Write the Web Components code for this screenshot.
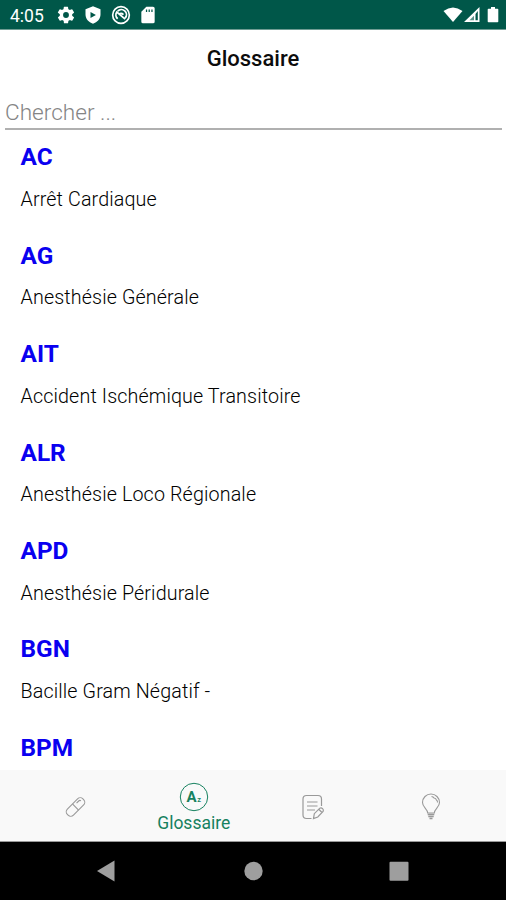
<!DOCTYPE html>
<html lang="fr">
<head>
<meta charset="utf-8">
<title>Glossaire</title>
<style>
  html, body { height: 100%; }
  body {
    margin: 0;
    overflow: hidden;
    font-family: Roboto, "Noto Sans", sans-serif;
    background: #fff;
  }
</style>
</head>
<body>
<glossary-app></glossary-app>

<script>
'use strict';

class BaseElement extends HTMLElement {
  constructor() {
    super();
    this._shadow = this.attachShadow({ mode: 'open' });
    this._shadow.innerHTML = this.template;
  }
}

class StatusBar extends BaseElement {
  get template() {
    return `
    <style>
      :host {
        display: flex;
        align-items: center;
        justify-content: space-between;
        box-sizing: border-box;
        height: 30px;
        padding: 1px 7px 0 10px;
        background: #005749;
        border-bottom: 1px solid #6f9c93;
        color: #fff;
        flex: none;
      }
      div { display: flex; align-items: center; }
      time { font-size: 17.5px; line-height: 28px; width: 46px; padding-top: 2px; }
      .left svg { margin-right: 7.4px; }
      svg { display: block; fill: #fff; }
    </style>
    <div class="left">
      <time>4:05</time>
      <svg width="20" height="20" viewBox="0 0 24 24"><path d="M19.4 13a7.500 7.500 0 0 0 0-2l2.100-1.600a.5.5 0 0 0 .1-.6l-2-3.500a.5.5 0 0 0-.6-.2l-2.500 1a7 7 0 0 0-1.700-1l-.4-2.600a.5.5 0 0 0-.5-.5h-4a.5.5 0 0 0-.5.4l-.4 2.700a7 7 0 0 0-1.700 1l-2.400-1a.5.5 0 0 0-.6.200l-2 3.400a.5.5 0 0 0 .1.700L4.600 11a7.500 7.500 0 0 0 0 2l-2.100 1.600a.5.5 0 0 0-.1.600l2 3.500a.5.5 0 0 0 .6.200l2.500-1a7 7 0 0 0 1.700 1l.3 2.600a.5.5 0 0 0 .5.500h4a.5.5 0 0 0 .5-.4l.4-2.700a7 7 0 0 0 1.700-1l2.400 1a.5.5 0 0 0 .6-.2l2-3.400a.5.5 0 0 0-.1-.7zM12 15.500a3.500 3.500 0 1 1 0-7 3.500 3.500 0 0 1 0 7z"/></svg>
      <svg width="20" height="20" viewBox="0 0 24 24"><path fill-rule="evenodd" d="M12 1.500L3 5v6.500c0 5.200 3.800 9.500 9 11 5.200-1.500 9-5.800 9-11V5zM9 8.500L15.500 12l-6.500 3.500z"/></svg>
      <svg width="20" height="20" viewBox="0 0 24 24"><g fill="none" stroke="#fff"><circle cx="12" cy="12" r="10" stroke-width="2"/><path d="M8 16.500A6 6 0 0 1 7 8.500L17 17M8 7.500a6 6 0 0 1 9 8M9.500 11.500q2.500-2.500 5.500 0" stroke-width="2.200"/></g></svg>
      <svg width="20" height="20" viewBox="0 0 24 24"><path fill-rule="evenodd" d="M18 2h-8L4 8v12a2 2 0 0 0 2 2h12a2 2 0 0 0 2-2V4a2 2 0 0 0-2-2zM9.500 5.500h1.500v3H9.500zM12.700 5.500h1.500v3h-1.500zM16 5.500h1.500v3H16z"/></svg>
    </div>
    <div>
      <svg width="20" height="18" viewBox="0 0 20 18"><path d="M.5 5Q10-2 19.500 5L10 16z"/></svg>
      <svg width="17" height="18" viewBox="0 0 17 18"><path fill-rule="evenodd" d="M16.500 1v15H1zM12.500 8v6.300H14.800V5z"/><path d="M6.500 14.300L11 9.700v4.600z" fill="#005749" opacity=".65"/></svg>
      <svg width="12" height="18" viewBox="0 0 12 18" style="margin-left:7px"><path d="M4 1h4v1.700h2.500q.8 0 .8.800v12q0 .8-.8.800h-9q-.8 0-.8-.8v-12q0-.8.8-.8H4z"/></svg>
    </div>`;
  }
}

class PageHeader extends BaseElement {
  get template() {
    return `
    <style>
      :host { display: block; flex: none; height: 61px; }
      h1 {
        margin: 0;
        padding-top: 1px;
        font-size: 22px;
        font-weight: 500;
        line-height: 55px;
        text-align: center;
        color: #0c0c0c;
      }
    </style>
    <h1><slot></slot></h1>`;
  }
}

class SearchField extends BaseElement {
  get template() {
    return `
    <style>
      :host { display: block; flex: none; height: 39px; padding: 0 4px 0 5px; }
      input {
        display: block;
        box-sizing: border-box;
        width: 100%;
        height: 39px;
        padding: 5px 0 0;
        border: 0;
        border-bottom: 2px solid #b0b0b0;
        outline: 0;
        background: transparent;
        font: 300 22.600px Roboto, sans-serif;
      }
      input::placeholder { color: #858585; opacity: 1; }
    </style>
    <input type="text">`;
  }
  connectedCallback() {
    this._shadow.querySelector('input').placeholder = this.getAttribute('placeholder');
  }
}

class GlossaryEntry extends BaseElement {
  get template() {
    return `
    <style>
      :host { display: block; height: 98.400px; padding-left: 20.500px; }
      .term {
        font-size: 24.400px;
        font-weight: 700;
        line-height: 30px;
        padding-top: 12.400px;
        color: #0a00f0;
      }
      .text {
        font-size: 19.700px;
        font-weight: 300;
        letter-spacing: 0.130px;
        line-height: 24px;
        padding-top: 15.600px;
        color: #000;
      }
    </style>
    <div class="term"><slot name="term"></slot></div>
    <div class="text"><slot></slot></div>`;
  }
}

class TabItem extends BaseElement {
  get template() {
    return `
    <style>
      :host {
        display: flex;
        flex: 1;
        flex-direction: column;
        align-items: center;
        justify-content: center;
        color: #999;
      }
      :host([active]) { color: #16815f; padding-top: 3px; }
      .label {
        font-size: 17.500px;
        line-height: 22px;
      }
      :host(:not([active])) .label { display: none; }
      ::slotted(svg) { display: block; }
    </style>
    <slot></slot>
    <div class="label"><slot name="label"></slot></div>`;
  }
}

class TabBar extends BaseElement {
  get template() {
    return `
    <style>
      :host {
        display: flex;
        box-sizing: border-box;
        flex: none;
        height: 72px;
        padding: 2px 16px 0;
        background: #f9f9f9;
        border-bottom: 1px solid #999;
      }
    </style>
    <slot></slot>`;
  }
}

class SystemNav extends BaseElement {
  get template() {
    return `
    <style>
      :host {
        display: flex;
        flex: none;
        justify-content: center;
        align-items: center;
        gap: 126px;
        height: 58px;
        background: #000;
      }
      svg { display: block; fill: #9e9e9e; }
    </style>
    <svg width="20" height="22" viewBox="0 0 20 22"><path d="M0 11L17.500.5v21z"/></svg>
    <svg width="20" height="20" viewBox="0 0 20 20"><circle cx="10.500" cy="10" r="9.200"/></svg>
    <svg width="20" height="20" viewBox="0 0 20 20"><rect x=".5" y=".8" width="19" height="19" rx="1"/></svg>`;
  }
}

class GlossaryApp extends BaseElement {
  get template() {
    return `
    <style>
      :host { display: flex; flex-direction: column; height: 100vh; }
      main { flex: 1; min-height: 0; overflow: hidden; }
      .az { font: 700 15px Roboto, sans-serif; fill: currentColor; }
      .az-small { font: 500 7.500px Roboto, sans-serif; fill: currentColor; }
    </style>
    <status-bar></status-bar>
    <page-header>Glossaire</page-header>
    <search-field placeholder="Chercher ..."></search-field>
    <main></main>
    <tab-bar>
      <tab-item>
        <svg width="24" height="24" viewBox="0 0 24 24" fill="none" stroke="currentColor" stroke-width="1.100">
          <g transform="rotate(-45 12.500 12)"><rect x="1.500" y="7.700" width="22" height="8.600" rx="3.800"/><path d="M12.500 7.700v8.600M16 10h3q1.500 0 1.700 1.500"/></g>
        </svg>
      </tab-item>
      <tab-item active>
        <svg width="30" height="30" viewBox="0 0 30 30">
          <circle cx="15" cy="15" r="13.700" fill="none" stroke="currentColor"/>
          <text class="az" x="7.500" y="19.800">A</text><text class="az-small" x="18.300" y="19.800">z</text>
        </svg>
        <span slot="label">Glossaire</span>
      </tab-item>
      <tab-item>
        <svg width="26" height="28" viewBox="0 0 26 28" fill="none" stroke="currentColor" stroke-width="1.200">
          <path d="M22.500 13V6q0-3.500-3.500-3.500H7.500Q4 2.500 4 6v16q0 3.500 3.500 3.500h5"/>
          <path d="M8 9h10.500M8 13h10.500M8 17h8"/>
          <path d="M14.500 25.500l.8-4.800 5.500-5.500q1.500-.8 2.800.5t.5 2.800l-5.300 5.500zM20 16.500l3 3"/>
        </svg>
      </tab-item>
      <tab-item>
        <svg width="22" height="28" viewBox="0 0 22 28" fill="none" stroke="currentColor" stroke-width="1.100">
          <path d="M7.700 20c0-4-5.200-5.500-5.200-10.500a8.500 8.500 0 0 1 17 0c0 5-5.200 6.500-5.200 10.500z"/>
          <path d="M11.500 3.500q1.800.2 2.500 1.500 2 .2 2.400 2 1.300.8 1.100 2.500"/>
          <path d="M7.700 21.500h6.600M8.300 23.500h5.400M9.500 25.500h3" stroke-width="1.400"/>
        </svg>
      </tab-item>
    </tab-bar>
    <system-nav></system-nav>`;
  }
  connectedCallback() {
    let list = this._shadow.querySelector('main');
    entries.forEach(([term, text]) => {
      let entry = document.createElement('glossary-entry');
      let name = document.createElement('span');
      name.slot = 'term';
      name.textContent = term;
      entry.append(name, text);
      list.appendChild(entry);
    });
  }
}

const entries = [
  ['AC', 'Arrêt Cardiaque'],
  ['AG', 'Anesthésie Générale'],
  ['AIT', 'Accident Ischémique Transitoire'],
  ['ALR', 'Anesthésie Loco Régionale'],
  ['APD', 'Anesthésie Péridurale'],
  ['BGN', 'Bacille Gram Négatif -'],
  ['BPM', '']
];

customElements.define('status-bar', StatusBar);
customElements.define('page-header', PageHeader);
customElements.define('search-field', SearchField);
customElements.define('glossary-entry', GlossaryEntry);
customElements.define('tab-item', TabItem);
customElements.define('tab-bar', TabBar);
customElements.define('system-nav', SystemNav);
customElements.define('glossary-app', GlossaryApp);
</script>
</body>
</html>
